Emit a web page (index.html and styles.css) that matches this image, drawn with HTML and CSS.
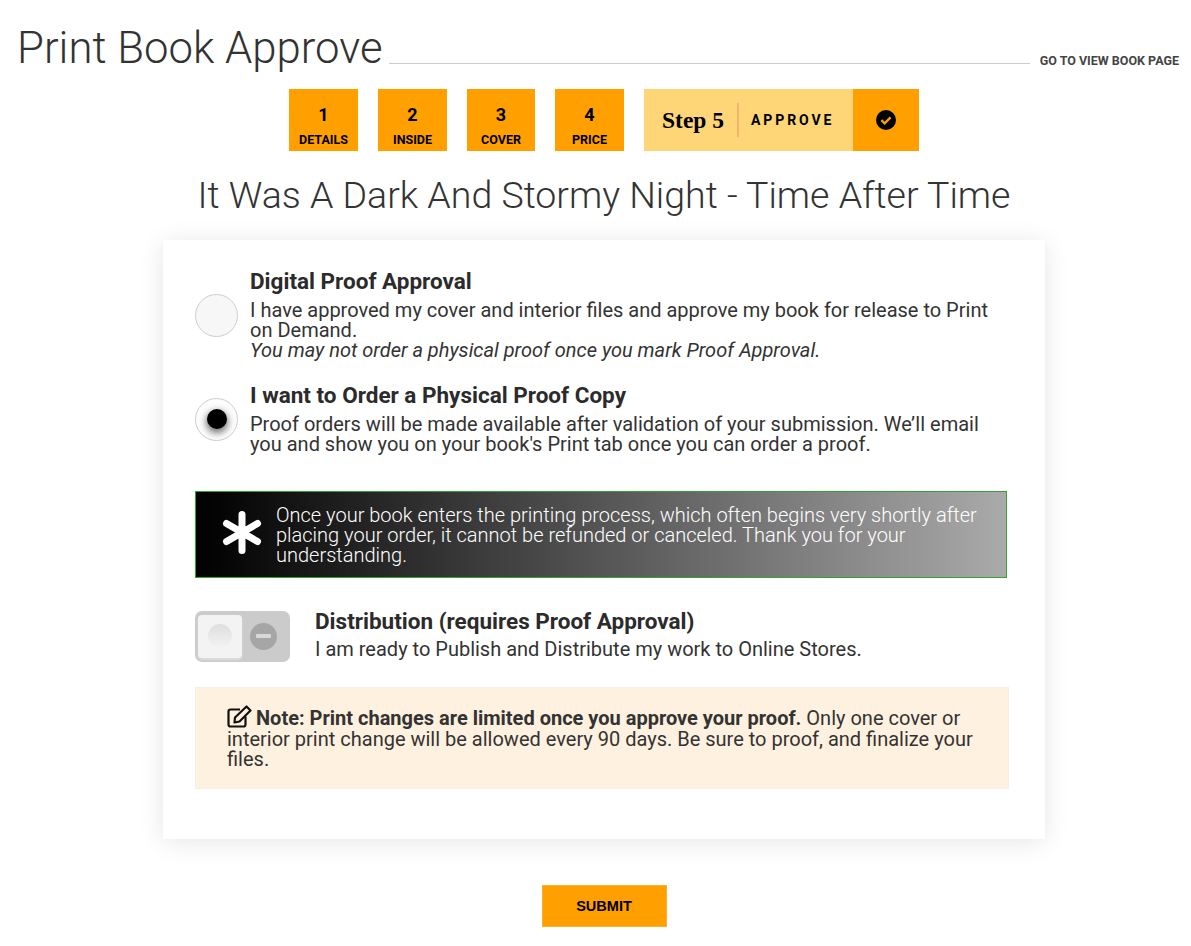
FILE: index.html
```html
<!DOCTYPE html>
<html lang="en">
<head>
<meta charset="utf-8">
<title>Print Book Approve</title>
<link rel="stylesheet" href="styles.css">
</head>
<body>
<header class="top">
  <h1 class="page-title">Print Book Approve</h1>
  <span class="rule"></span>
  <a class="view-link" href="#">GO TO VIEW BOOK PAGE</a>
</header>
<nav class="steps">
  <a class="step w69" href="#"><b>1</b><span>DETAILS</span></a>
  <a class="step w69" href="#"><b>2</b><span>INSIDE</span></a>
  <a class="step w68" href="#"><b>3</b><span>COVER</span></a>
  <a class="step w69" href="#"><b>4</b><span>PRICE</span></a>
  <div class="current">
    <div class="current-main">
      <span class="current-num">Step 5</span>
      <span class="current-label">APPROVE</span>
    </div>
    <div class="current-icon">
      <svg width="20" height="20" viewBox="0 0 20 20"><circle cx="10" cy="10" r="10" fill="#000"/><path d="M5.400 10.200l3.200 3.200 6-6" fill="none" stroke="#ff9f00" stroke-width="2.400"/></svg>
    </div>
  </div>
</nav>
<h2 class="book-title">It Was A Dark And Stormy Night - Time After Time</h2>
<main class="card">
  <div class="option first">
    <span class="radio"></span>
    <div class="option-text">
      <h3>Digital Proof Approval</h3>
      <p>I have approved my cover and interior files and approve my book for release to Print on Demand.<br><em>You may not order a physical proof once you mark Proof Approval.</em></p>
    </div>
  </div>
  <div class="option second">
    <span class="radio checked"><span class="dot"></span></span>
    <div class="option-text">
      <h3>I want to Order a Physical Proof Copy</h3>
      <p>Proof orders will be made available after validation of your submission. We’ll email you and show you on your book's Print tab once you can order a proof.</p>
    </div>
  </div>
  <div class="alert">
    <svg class="asterisk" width="40" height="43" viewBox="0 0 40 43"><path d="M20 3.500v36M4.500 12.500l31 18M35.500 12.500l-31 18" stroke="#fff" stroke-width="7" stroke-linecap="round" fill="none"/></svg>
    <p>Once your book enters the printing process, which often begins very shortly after placing your order, it cannot be refunded or canceled. Thank you for your understanding.</p>
  </div>
  <div class="distribution">
    <div class="toggle">
      <span class="thumb"><span class="thumb-dot"></span></span>
      <span class="toggle-off"><span class="minus"></span></span>
    </div>
    <div class="distribution-text">
      <h3>Distribution (requires Proof Approval)</h3>
      <p>I am ready to Publish and Distribute my work to Online Stores.</p>
    </div>
  </div>
  <div class="note">
    <svg class="note-icon" width="26" height="23" viewBox="0 0 26 23"><path d="M13 4.500H3.500A2 2 0 0 0 1.500 6.500v13a2 2 0 0 0 2 2h13a2 2 0 0 0 2-2v-8" fill="none" stroke="#111" stroke-width="2.200"/><path d="M8 12.500L19.500 1.500l4 4L12.500 16.500l-5 1z" fill="none" stroke="#111" stroke-width="2.200" stroke-linejoin="round"/></svg><strong>Note: Print changes are limited once you approve your proof.</strong> Only one cover or interior print change will be allowed every 90 days. Be sure to proof, and finalize your files.
  </div>
</main>
<div class="actions"><button class="submit" type="button">SUBMIT</button></div>
</body>
</html>
```
FILE: styles.css
```css
* { box-sizing: border-box; }
html, body { margin: 0; background: #fff; }
body {
  padding: 0 0 0 17px;
  font-family: Roboto, "Liberation Sans", sans-serif;
  color: #333;
  height: 946px;
  overflow: hidden;
}
.top {
  display: flex;
  align-items: flex-end;
  height: 89px;
  padding: 0 12px 16px 0;
}
.page-title {
  margin: 0;
  font-size: 43.700px;
  font-weight: 300;
  line-height: 50px;
  color: #333;
  white-space: nowrap;
}
.rule {
  flex: 1;
  height: 1px;
  background: #ccc;
  margin: 0 10px 9px 6px;
}
.view-link {
  font-size: 12.500px;
  font-weight: 700;
  line-height: 16px;
  color: #444;
  text-decoration: none;
  margin-bottom: 4px;
  white-space: nowrap;
}
.steps {
  display: flex;
  justify-content: center;
  gap: 20px;
  height: 62px;
}
.step {
  display: flex;
  flex-direction: column;
  align-items: center;
  padding-top: 15px;
  background: #ff9f00;
  color: #000;
  text-decoration: none;
}
.w69 { width: 69px; }
.w68 { width: 68px; }
.step b { font-size: 18px; font-weight: 700; line-height: 21px; }
.step span { font-size: 12.500px; font-weight: 700; line-height: 14px; margin-top: 8px; }
.current { display: flex; width: 275px; }
.current-main {
  flex: 1;
  display: flex;
  align-items: center;
  background: #ffd677;
  padding-left: 18px;
  color: #000;
}
.current-num {
  font-family: "Liberation Serif", serif;
  font-size: 23.500px;
  font-weight: 700;
  line-height: 34px;
  padding-right: 13px;
  border-right: 2px solid #f2b56b;
}
.current-label {
  margin-left: 12px;
  font-size: 14px;
  font-weight: 700;
  letter-spacing: 2.900px;
}
.current-icon {
  width: 66px;
  display: flex;
  align-items: center;
  justify-content: center;
  background: #ff9f00;
}
.book-title {
  margin: 20px 0 21px;
  text-align: center;
  font-size: 37.500px;
  font-weight: 300;
  line-height: 48px;
  color: #333;
}
.card {
  width: 882px;
  height: 599px;
  margin: 0 auto;
  padding: 28px 32px 0;
  background: #fff;
  box-shadow: 0 3px 24px rgba(0, 0, 0, 0.1);
}
.option { display: flex; align-items: center; gap: 12px; }
.second { margin-top: 22px; }
.radio {
  flex: none;
  display: flex;
  align-items: center;
  justify-content: center;
  width: 43px;
  height: 43px;
  border-radius: 50%;
  border: 1px solid #c5d0d6;
  background: #f7f7f7;
  margin-top: 2px;
}
.radio.checked { background: #fdfdfd; }
.dot {
  width: 20px;
  height: 20px;
  border-radius: 50%;
  background: #000;
  box-shadow: 0 3px 7px 1px rgba(0, 0, 0, 0.55);
}
.option-text { flex: 1; padding-right: 18px; }
h3 {
  margin: 0;
  font-size: 22.500px;
  font-weight: 700;
  line-height: 26px;
  color: #2b2b2b;
}
.option-text p {
  margin: 6px 0 0;
  font-size: 20px;
  line-height: 20px;
}
.alert {
  display: flex;
  align-items: center;
  height: 87px;
  width: 812px;
  margin-top: 37px;
  padding: 1px 24px 0 26px;
  border: 1px solid #2ea62e;
  background: linear-gradient(to right, #000, #aaa);
  color: #fff;
}
.asterisk { flex: none; margin: 0 14px 5px 0; }
.alert p { margin: 0; font-size: 20px; line-height: 20px; font-weight: 300; }
.distribution { display: flex; align-items: flex-start; gap: 25px; margin-top: 33px; }
.toggle {
  flex: none;
  display: flex;
  align-items: center;
  width: 95px;
  height: 51px;
  border-radius: 7px;
  background: #cbcbcb;
  padding: 2px 2px 3px 3px;
}
.thumb {
  display: flex;
  align-items: center;
  justify-content: center;
  width: 44px;
  height: 43px;
  border-radius: 4px;
  background: #f3f3f3;
  box-shadow: 0 2px 2px #ddd;
}
.thumb-dot { width: 24px; height: 24px; border-radius: 50%; background: linear-gradient(#dedede, #f3f3f3); }
.toggle-off {
  display: flex;
  align-items: center;
  justify-content: center;
  width: 27px;
  height: 27px;
  margin-left: 8px;
  border-radius: 50%;
  background: #a6a6a6;
}
.minus { width: 15px; height: 4px; border-radius: 1px; background: #d8d8d8; }
.distribution-text h3 { line-height: 20px; }
.distribution-text p { margin: 8px 0 0; font-size: 20px; line-height: 20px; }
.note {
  width: 814px;
  height: 102px;
  margin-top: 25px;
  padding: 17px 30px 0 31px;
  background: #fff1df;
  border: 1px solid #f1efe9;
  font-size: 20px;
  line-height: 20.500px;
}
.note strong { font-weight: 700; }
.note-icon { vertical-align: -3px; margin-right: 3px; }
.actions { display: flex; justify-content: center; margin-top: 46px; }
.submit {
  width: 125px;
  height: 42px;
  border: 1px solid #ffae2b;
  background: #ff9f00;
  color: #000;
  font-family: "Liberation Sans", sans-serif;
  font-size: 14.500px;
  font-weight: 700;
}
```
